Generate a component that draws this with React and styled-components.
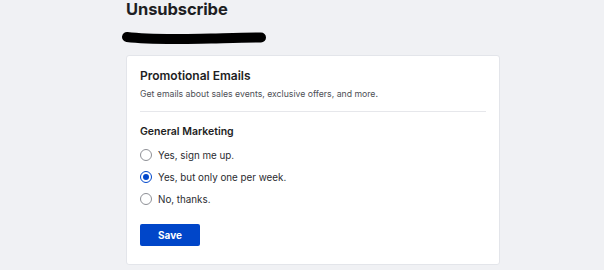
import React, { useState } from 'react';
import styled, { createGlobalStyle } from 'styled-components';

const GlobalStyle = createGlobalStyle`
  html, body {
    margin: 0;
    padding: 0;
    background: #f0f1f4;
  }
  body {
    font-family: Inter, "Noto Sans", "Liberation Sans", sans-serif;
    color: #1e1e23;
  }
`;

const Page = styled.div`
  width: 374px;
  padding: 0 0 0 126px;
  box-sizing: content-box;
`;

const Title = styled.h1`
  margin: 0;
  font-size: 16.5px;
  line-height: 18px;
  font-weight: 700;
  letter-spacing: -0.1px;
`;

const Redacted = styled.svg`
  display: block;
  margin: 13px 0 0 -5px;
`;

const Card = styled.section`
  margin-top: 10px;
  background: #ffffff;
  border: 1px solid #e3e5ea;
  border-radius: 3px;
  padding: 12px 13px 18px 13px;
`;

const CardTitle = styled.h2`
  margin: 0;
  font-size: 12px;
  line-height: 16px;
  font-weight: 600;
`;

const CardCopy = styled.p`
  margin: 4px 0 0;
  font-size: 8.7px;
  line-height: 12px;
  color: #4d4f55;
`;

const Divider = styled.hr`
  margin: 11px 0 0;
  border: 0;
  border-top: 1px solid #e6e7eb;
`;

const GroupTitle = styled.h3`
  margin: 13px 0 0;
  font-size: 10.5px;
  line-height: 14px;
  font-weight: 600;
`;

const Options = styled.div`
  display: flex;
  flex-direction: column;
  gap: 8px;
  margin-top: 9px;
`;

const Option = styled.label`
  display: flex;
  align-items: center;
  gap: 6px;
  height: 14px;
  font-size: 9.8px;
  color: #2a2b30;
  cursor: pointer;
`;

const Dot = styled.span`
  width: 12px;
  height: 12px;
  box-sizing: border-box;
  border-radius: 50%;
  border: 1px solid ${(p) => (p.$checked ? '#0047cc' : '#8e9096')};
  display: flex;
  align-items: center;
  justify-content: center;
  &::after {
    content: '';
    width: 6px;
    height: 6px;
    border-radius: 50%;
    background: ${(p) => (p.$checked ? '#0047cc' : 'transparent')};
  }
`;

const SaveButton = styled.button`
  margin-top: 18px;
  width: 60px;
  height: 22px;
  border: 0;
  border-radius: 2px;
  background: #0046c9;
  color: #ffffff;
  font-family: inherit;
  font-size: 10px;
  font-weight: 700;
  cursor: pointer;
`;

const choices = ['Yes, sign me up.', 'Yes, but only one per week.', 'No, thanks.'];

export default function App() {
  const [picked, setPicked] = useState(1);
  return (
    <>
      <GlobalStyle />
      <Page>
        <Title>Unsubscribe</Title>
        <Redacted width="146" height="14" viewBox="0 0 146 14">
          <path
            d="M6 6 C30 9 60 8 90 7.5 C110 7 125 6.5 140 6.5"
            stroke="#000"
            strokeWidth="10"
            strokeLinecap="round"
            fill="none"
          />
        </Redacted>
        <Card>
          <CardTitle>Promotional Emails</CardTitle>
          <CardCopy>Get emails about sales events, exclusive offers, and more.</CardCopy>
          <Divider />
          <GroupTitle>General Marketing</GroupTitle>
          <Options>
            {choices.map((c, i) => (
              <Option key={c} onClick={() => setPicked(i)}>
                <Dot $checked={picked === i} />
                {c}
              </Option>
            ))}
          </Options>
          <SaveButton>Save</SaveButton>
        </Card>
      </Page>
    </>
  );
}
